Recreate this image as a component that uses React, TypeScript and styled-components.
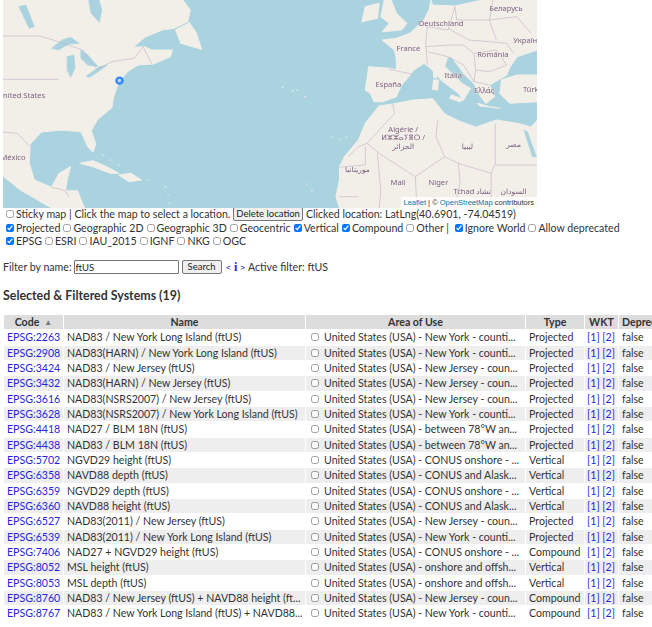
import React from "react";
import styled, { createGlobalStyle } from "styled-components";

const Global = createGlobalStyle`
  html, body { margin: 0; padding: 0; overflow: hidden; background: #fff; }
  body { font-family: Lato, "Open Sans", sans-serif; font-size: 10.6px; color: #333; }
`;
const Page = styled.div`padding-left: 3px; width: 700px;`;
const MapBox = styled.div`position: relative; width: 534px; height: 208px; overflow: hidden; background: #aad3df;`;
const MapSvg = styled.svg`display: block; width: 534px; height: 208px; filter: blur(0.4px);`;
const MapLabel = styled.text`font-family: "Noto Sans", "DejaVu Sans", sans-serif; font-size: 22px; fill: #7d5f80; text-anchor: middle; stroke: #f2efe9; stroke-width: 2px; paint-order: stroke;`;
const Attribution = styled.div`
  position: absolute; right: 0; bottom: 0; height: 11px; padding: 0 3px 0 3px;
  background: rgba(255,255,255,.8); font: 7.5px/11px "Liberation Sans", sans-serif; color: #333; white-space: nowrap;
`;
const AttrLink = styled.span`color: #0078a8;`;
const Line = styled.div`
  display: flex; align-items: center; height: 13.5px; white-space: pre;
`;
const FirstLine = styled(Line)`height: 12px; padding-bottom: 1px;`;
const Check = styled.input.attrs({ type: "checkbox" })`
  width: 8px; height: 8px; margin: 0 2px 0 3px; flex: none; accent-color: #0075ff;
  &:not(:checked) { opacity: .7; }
`;
const SmallButton = styled.button<{ $pad: number }>`
  height: 14px; padding: 0 ${(p) => p.$pad}px; margin: 0 3px; font: 9.5px/12px Lato, sans-serif; color: #222;
  background: #efefef; border: 1px solid #767676; border-radius: 2px; box-sizing: border-box;
`;
const FilterRow = styled.div`display: flex; align-items: center; height: 14px; margin-top: 12px; white-space: pre;`;
const NameInput = styled.input`
  width: 105px; height: 14px; margin-left: 2px; padding: 0 1px; box-sizing: border-box;
  font: 9.5px Lato, sans-serif; color: #222; border: 1px solid #767676; border-radius: 1px;
`;
const Nav = styled.span`color: #2a1fe0; margin-left: 1px; font-size: 10px;`;
const Info = styled.b`font-family: "Liberation Serif", serif; font-size: 12px;`;
const Heading = styled.h3`margin: 14px 0 12px; font: bold 12.4px/15px Lato, sans-serif; color: #333;`;
const TableGrid = styled.div`
  display: grid; width: 660px; margin-left: 1px;
  grid-template-columns: 59px 241px 219px 58px 33px 44px;
  grid-auto-rows: 14.33px; gap: 1px;
`;
const HeadCell = styled.div`
  background: #ddd; font-weight: bold; text-align: center; white-space: nowrap; line-height: 14.33px; overflow: hidden;
`;
const HeadLeft = styled(HeadCell)`text-align: left; padding-left: 3px;`;
const Arrow = styled.span`color: #777; font-size: 8px; margin-left: 5px; vertical-align: 1px;`;
const Cell = styled.div<{ $shade: boolean }>`
  display: flex; align-items: center; padding: 0 0 0 3px; white-space: pre; line-height: 14.33px; overflow: hidden;
  background: ${(p) => (p.$shade ? "#eee" : "transparent")};
`;
const WktCell = styled(Cell)`padding-left: 2px;`;
const A = styled.a`color: #2a1fe0; text-decoration: none;`;
const AreaCheck = styled.input.attrs({ type: "checkbox" })`width: 8px; height: 8px; margin: 0 5px 0 2px; flex: none; opacity: .7;`;

const NY = "United States (USA) - New York - counti...";
const NJ = "United States (USA) - New Jersey - coun...";
const BT = "United States (USA) - between 78°W an...";
const CO = "United States (USA) - CONUS onshore - ...";
const AK = "United States (USA) - CONUS and Alask...";
const OF = "United States (USA) - onshore and offsh...";
const rows: [string, string, string, string][] = [
  ["2263", "NAD83 / New York Long Island (ftUS)", NY, "Projected"],
  ["2908", "NAD83(HARN) / New York Long Island (ftUS)", NY, "Projected"],
  ["3424", "NAD83 / New Jersey (ftUS)", NJ, "Projected"],
  ["3432", "NAD83(HARN) / New Jersey (ftUS)", NJ, "Projected"],
  ["3616", "NAD83(NSRS2007) / New Jersey (ftUS)", NJ, "Projected"],
  ["3628", "NAD83(NSRS2007) / New York Long Island (ftUS)", NY, "Projected"],
  ["4418", "NAD27 / BLM 18N (ftUS)", BT, "Projected"],
  ["4438", "NAD83 / BLM 18N (ftUS)", BT, "Projected"],
  ["5702", "NGVD29 height (ftUS)", CO, "Vertical"],
  ["6358", "NAVD88 depth (ftUS)", AK, "Vertical"],
  ["6359", "NGVD29 depth (ftUS)", CO, "Vertical"],
  ["6360", "NAVD88 height (ftUS)", AK, "Vertical"],
  ["6527", "NAD83(2011) / New Jersey (ftUS)", NJ, "Projected"],
  ["6539", "NAD83(2011) / New York Long Island (ftUS)", NY, "Projected"],
  ["7406", "NAD27 + NGVD29 height (ftUS)", CO, "Compound"],
  ["8052", "MSL height (ftUS)", OF, "Vertical"],
  ["8053", "MSL depth (ftUS)", OF, "Vertical"],
  ["8760", "NAD83 / New Jersey (ftUS) + NAVD88 height (ft...", NJ, "Compound"],
  ["8767", "NAD83 / New York Long Island (ftUS) + NAVD88...", NY, "Compound"],
];

const land = [
  "0,0 255,0 262,40 290,72 298,30 290,0 530,0 552,30 545,65 505,85 470,90 420,112 385,142 420,140 440,150 500,150 495,170 445,192 400,195 370,215 345,245 330,290 325,322 282,360 265,392 278,432 270,456 255,440 235,395 180,390 120,396 88,432 85,490 100,540 150,562 172,520 205,500 195,540 190,572 225,572 245,624 150,624 60,570 0,520",
  "510,90 550,68 570,100 585,148 560,140 525,130",
  "1115,0 1135,0 1150,40 1180,70 1165,90 1110,95 1130,70 1105,50",
  "1060,20 1100,10 1095,55 1050,65",
  "1250,0 1255,15 1320,18 1400,0 1560,0 1560,150 1530,160 1500,170 1480,200 1470,225 1445,240 1420,255 1435,290 1410,310 1395,290 1375,250 1345,220 1310,170 1298,172 1290,200 1340,250 1365,265 1345,300 1330,280 1280,240 1250,205 1230,190 1200,210 1190,225 1165,255 1150,290 1110,305 1085,305 1075,280 1060,270 1070,200 1130,205 1150,210 1150,180 1145,150 1110,120 1150,115 1190,100 1230,60 1245,30",
  "1455,240 1500,225 1560,225 1560,305 1480,310 1450,280",
  "1100,318 1140,312 1200,300 1255,296 1290,342 1330,362 1380,382 1440,360 1510,372 1540,382 1560,360 1560,624 985,624 975,590 985,540 985,500 1000,470 1040,420 1060,370",
  "232,490 270,482 310,500 345,520 320,520 270,500",
  "345,525 380,520 410,540 375,545",
  "1310,285 1345,298 1335,305 1305,295",
  "1258,240 1272,240 1270,270 1255,268",
  "1258,214 1268,214 1266,234 1258,232",
  "1385,310 1420,320 1450,325 1395,318",
];
const lakes = [
  "150,145 180,120 205,112 230,130 200,132 170,150",
  "195,170 215,165 218,205 205,232 195,210",
  "235,150 255,165 285,200 255,195 235,175",
  "250,228 290,200 312,195 285,215 260,232",
  "55,20 75,15 100,80 85,85",
  "1520,390 1530,395 1556,470 1545,470",
];
const islands: [number, number][] = [
  [820, 262], [850, 272], [862, 270], [885, 290], [965, 412], [985, 418], [1005, 412],
  [890, 552], [905, 572], [480, 560], [488, 585], [492, 610], [300, 465], [320, 480], [345, 495], [430, 540],
];
const borders = [
  "0,108 115,108 170,125 240,150 255,175 282,208 325,185 390,175 415,140 440,190",
  "0,238 170,238", "0,395 50,400 88,440", "150,562 165,565 190,572 200,590",
  "1065,430 1100,460 1205,530 1290,470 1330,490 1425,520 1437,490 1437,370",
  "1290,470 1265,410 1270,360", "1095,460 1105,575 1100,624", "1205,530 1210,624",
  "1330,490 1335,550 1320,610", "1425,520 1425,624", "1437,495 1560,495",
  "1065,430 1040,440 1010,470", "980,502 1060,495 1060,440", "1065,430 1145,340 1140,312", "985,590 1040,590",
  "1240,80 1235,130 1240,195", "1240,80 1300,90 1320,20", "1130,208 1195,222",
  "1235,140 1300,135 1345,135 1375,160 1380,210 1420,215", "1300,85 1360,120 1420,125 1470,130 1490,160",
  "1320,20 1325,60 1420,60 1440,120", "1420,60 1500,50 1540,100", "1375,160 1440,150 1470,195 1420,215",
  "1300,170 1345,195 1375,245", "1380,210 1375,245 1420,255", "1240,155 1300,170", "1430,0 1420,60",
];
const labels: [number, number, string][] = [
  [62, 294, "United States"], [38, 480, "México"], [1127, 262, "España"], [1185, 153, "France"],
  [1280, 78, "Deutschland"], [1315, 233, "Italia"], [1430, 170, "România"], [1405, 280, "Ελλάς"],
  [1540, 277, "Türk"], [1530, 129, "Україна"], [1468, 32, "Беларусь"], [1170, 397, "Algérie /"],
  [1170, 421, "ⵍⵣⵣⴰⵢⴻⵔ /"], [1170, 446, "الجزائر"], [1356, 446, "ليبيا"], [1490, 440, "مصر"],
  [1037, 515, "موريتانيا"], [1155, 555, "Mali"], [1272, 556, "Niger"], [1370, 581, "Tchad تشاد"], [1490, 582, "السودان"],
];

export default function App() {
  return (
    <Page>
      <Global />
      <MapBox>
        <MapSvg viewBox="9 0 1549 624" preserveAspectRatio="none">
          <g fill="#f2efe9" stroke="#f2efe9" strokeWidth="3" strokeLinejoin="round">{land.map((p, i) => <polygon key={i} points={p} />)}</g>
          <g fill="#aad3df" stroke="#aad3df" strokeWidth="2" strokeLinejoin="round">{lakes.map((p, i) => <polygon key={i} points={p} />)}</g>
          <g fill="#e4e8e2">{islands.map(([x, y], i) => <circle key={i} cx={x} cy={y} r="2.5" />)}</g>
          <g fill="none" stroke="#c2b2c4" strokeWidth="1.8">{borders.map((p, i) => <polyline key={i} points={p} />)}</g>
          <g>{labels.map(([x, y, t]) => <MapLabel key={t} x={x} y={y}>{t}</MapLabel>)}</g>
          <circle cx="347" cy="242" r="9" fill="#3388ff" fillOpacity=".2" stroke="#3388ff" strokeWidth="7" />
        </MapSvg>
        <Attribution><AttrLink>Leaflet</AttrLink> | © <AttrLink>OpenStreetMap</AttrLink> contributors</Attribution>
      </MapBox>
      <FirstLine>
        <Check />Sticky map | Click the map to select a location.<SmallButton $pad={2}>Delete location</SmallButton>Clicked location: LatLng(40.6901, -74.04519)
      </FirstLine>
      <Line>
        <Check defaultChecked />Projected<Check />Geographic 2D<Check />Geographic 3D<Check />Geocentric<Check defaultChecked />Vertical<Check defaultChecked />Compound<Check />Other | <Check defaultChecked />Ignore World<Check />Allow deprecated
      </Line>
      <Line>
        <Check defaultChecked />EPSG<Check />ESRI<Check />IAU_2015<Check />IGNF<Check />NKG<Check />OGC
      </Line>
      <FilterRow>
        Filter by name:<NameInput defaultValue="ftUS" /><SmallButton $pad={5}>Search</SmallButton>
        <Nav>{"< "}<Info>i</Info>{" >"}</Nav> Active filter: ftUS
      </FilterRow>
      <Heading>Selected &amp; Filtered Systems (19)</Heading>
      <TableGrid>
        <HeadCell>Code<Arrow>▲</Arrow></HeadCell>
        <HeadCell>Name</HeadCell>
        <HeadCell>Area of Use</HeadCell>
        <HeadCell>Type</HeadCell>
        <HeadCell>WKT</HeadCell>
        <HeadLeft>Deprecated</HeadLeft>
        {rows.map(([code, name, area, type], i) => {
          const shade = i % 2 === 1;
          return (
            <React.Fragment key={code}>
              <Cell $shade={shade}><A>EPSG:{code}</A></Cell>
              <Cell $shade={shade}>{name}</Cell>
              <Cell $shade={shade}><AreaCheck />{area}</Cell>
              <Cell $shade={shade}>{type}</Cell>
              <WktCell $shade={shade}><span><A>[1]</A> <A>[2]</A></span></WktCell>
              <Cell $shade={shade}>false</Cell>
            </React.Fragment>
          );
        })}
      </TableGrid>
    </Page>
  );
}
